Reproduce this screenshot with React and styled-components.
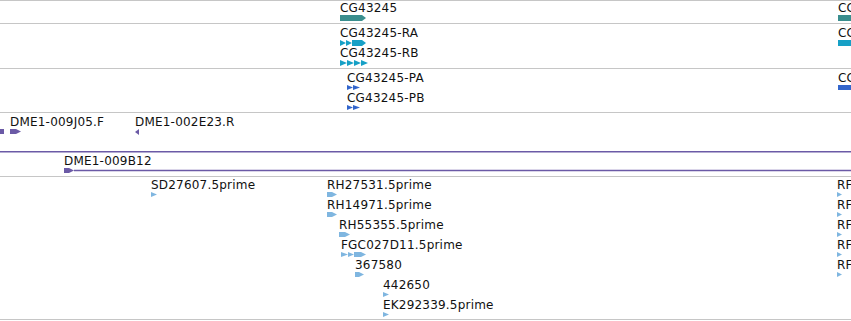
import styled, { createGlobalStyle } from "styled-components"

const GlobalStyle = createGlobalStyle`
  html, body { margin:0; padding:0; background:#fff; }
  body { font-family:"DejaVu Sans", "Noto Sans", sans-serif; }
`

const teal = "#3a8e8e"
const cyan = "#16a0c6"
const blue = "#3366cc"
const purple = "#6b5aa6"
const est = "#7fb6e0"

const Browser = styled.div`
  width:851px;
  height:321px;
  overflow:hidden;
  background:#fff;
  display:flex;
  flex-direction:column;
`

const Track = styled.div`
  position:relative;
  flex:none;
  height:${p => p.$h}px;
  border-top:1px solid #c6c6c6;
  overflow:hidden;
  &:last-child{
    border-bottom:1px solid #c6c6c6;
  }
`

const Feature = styled.div.attrs(p => ({
  style: { left: p.$x + "px", top: p.$y + "px" }
}))`
  position:absolute;
  display:flex;
  flex-direction:column;
  align-items:flex-start;
`

const Label = styled.span`
  display:block;
  height:14px;
  font-size:12px;
  line-height:14px;
  letter-spacing:0.2px;
  color:#111;
  white-space:nowrap;
`

const Glyph = styled.svg`
  display:block;
  overflow:visible;
  fill:${p => p.$color};
  stroke:${p => p.$color};
  stroke-width:0;
`

const Line = styled.line`
  stroke-width:1.5;
`

// glyph pieces
const arrow = (x, w, h, tip = 4) => (
  <polygon key={"a" + x} points={`${x},0 ${x + w - tip},0 ${x + w},${h / 2} ${x + w - tip},${h} ${x},${h}`} />
)
const tri = (x, w, h) => (
  <polygon key={"t" + x} points={`${x},0 ${x + w},${h / 2} ${x},${h}`} />
)
const triLeft = (x, w, h) => (
  <polygon key={"l" + x} points={`${x + w},0 ${x},${h / 2} ${x + w},${h}`} />
)
const box = (x, w, h) => <rect key={"b" + x} x={x} y={0} width={w} height={h} />
const tail = (x1, x2, h) => <Line key={"n" + x1} x1={x1} x2={x2} y1={h / 2} y2={h / 2} />

const tracks = [
  {
    h: 22,
    color: teal,
    features: [
      { x: 340, y: 0, label: "CG43245", w: 26, gh: 6, parts: [arrow(0, 26, 6)] },
      { x: 838, y: 0, label: "CG43102", w: 30, gh: 6, parts: [arrow(0, 30, 6)] },
    ],
  },
  {
    h: 44,
    color: cyan,
    features: [
      { x: 340, y: 2, label: "CG43245-RA", w: 26, gh: 6, parts: [tri(0, 6, 6), tri(6, 6, 6), arrow(12, 14, 6)] },
      { x: 340, y: 22, label: "CG43245-RB", w: 28, gh: 6, parts: [tri(0, 7, 6), tri(7, 7, 6), tri(14, 7, 6), tri(21, 7, 6)] },
      { x: 838, y: 2, label: "CG43102-RA", w: 30, gh: 6, parts: [arrow(0, 30, 6)] },
    ],
  },
  {
    h: 43,
    color: blue,
    features: [
      { x: 347, y: 2, label: "CG43245-PA", w: 13, gh: 5, parts: [tri(0, 6, 5), tri(6, 7, 5)] },
      { x: 347, y: 22, label: "CG43245-PB", w: 13, gh: 5, parts: [tri(0, 6, 5), tri(6, 7, 5)] },
      { x: 838, y: 2, label: "CG43102-PA", w: 30, gh: 5, parts: [arrow(0, 30, 5)] },
    ],
  },
  {
    h: 63,
    color: purple,
    features: [
      { x: -2, y: 16, w: 6, gh: 5, parts: [box(0, 6, 5)] },
      { x: 10, y: 2, label: "DME1-009J05.F", w: 11, gh: 5, parts: [arrow(0, 11, 5, 5)] },
      { x: 135, y: 2, label: "DME1-002E23.R", w: 4, gh: 6, parts: [triLeft(0, 4, 6)] },
      { x: 0, y: 38, w: 851, gh: 2, parts: [box(0, 851, 1.5)] },
      { x: 64, y: 41, label: "DME1-009B12", w: 800, gh: 5, parts: [arrow(0, 10, 5, 5), tail(10, 800, 5)] },
    ],
  },
  {
    h: 142,
    color: est,
    features: [
      { x: 151, y: 1, label: "SD27607.5prime", w: 6, gh: 5, parts: [tri(0, 6, 5)] },
      { x: 327, y: 1, label: "RH27531.5prime", w: 10, gh: 5, parts: [arrow(0, 10, 5, 5)] },
      { x: 327, y: 21, label: "RH14971.5prime", w: 10, gh: 5, parts: [arrow(0, 10, 5, 5)] },
      { x: 339, y: 41, label: "RH55355.5prime", w: 11, gh: 5, parts: [arrow(0, 11, 5, 5)] },
      { x: 341, y: 61, label: "FGC027D11.5prime", w: 25, gh: 5, parts: [tri(0, 7, 5), tri(7, 6, 5), arrow(13, 12, 5, 5)] },
      { x: 355, y: 81, label: "367580", w: 9, gh: 5, parts: [arrow(0, 9, 5, 5)] },
      { x: 383, y: 101, label: "442650", w: 6, gh: 5, parts: [tri(0, 6, 5)] },
      { x: 383, y: 121, label: "EK292339.5prime", w: 6, gh: 5, parts: [tri(0, 6, 5)] },
      { x: 837, y: 1, label: "RF43817.5prime", w: 5, gh: 5, parts: [tri(0, 5, 5)] },
      { x: 837, y: 21, label: "RF50364.5prime", w: 5, gh: 5, parts: [tri(0, 5, 5)] },
      { x: 837, y: 41, label: "RF04725.5prime", w: 5, gh: 5, parts: [tri(0, 5, 5)] },
      { x: 837, y: 61, label: "RF66510.5prime", w: 5, gh: 5, parts: [tri(0, 5, 5)] },
      { x: 837, y: 81, label: "RF71382.5prime", w: 5, gh: 5, parts: [tri(0, 5, 5)] },
    ],
  },
]

const App = () => {
  return (
    <>
      <GlobalStyle />
      <Browser>
        {tracks.map((t, i) => (
          <Track key={i} $h={t.h}>
            {t.features.map((f, j) => (
              <Feature key={j} $x={f.x} $y={f.y}>
                {f.label && <Label>{f.label}</Label>}
                <Glyph $color={t.color} width={f.w} height={f.gh} viewBox={`0 0 ${f.w} ${f.gh}`}>
                  {f.parts}
                </Glyph>
              </Feature>
            ))}
          </Track>
        ))}
      </Browser>
    </>
  )
}

export default App
